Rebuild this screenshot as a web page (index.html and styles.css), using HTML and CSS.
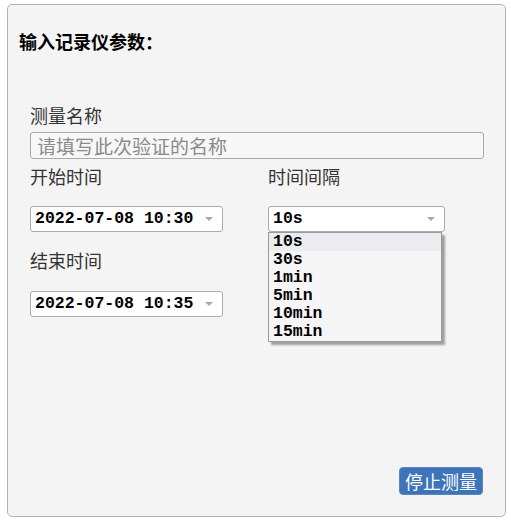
FILE: index.html
```html
<!DOCTYPE html>
<html lang="zh">
<head>
<meta charset="utf-8">
<title>输入记录仪参数</title>
<link rel="stylesheet" href="styles.css">
</head>
<body>
<div class="panel">
  <h2 class="title">输入记录仪参数：</h2>
  <div class="form">
    <div class="label label-first">测量名称</div>
    <div class="input"><span class="placeholder">请填写此次验证的名称</span></div>
    <div class="cols">
      <div class="col col-left">
        <div class="label">开始时间</div>
        <div class="select select-wide"><span class="val">2022-07-08 10:30</span><span class="caret"></span></div>
        <div class="label label-end">结束时间</div>
        <div class="select select-wide select-end"><span class="val">2022-07-08 10:35</span><span class="caret"></span></div>
      </div>
      <div class="col col-right">
        <div class="label">时间间隔</div>
        <div class="select-wrap">
          <div class="select select-narrow"><span class="val">10s</span><span class="caret"></span></div>
          <ul class="dropdown">
            <li class="opt active">10s</li>
            <li class="opt">30s</li>
            <li class="opt">1min</li>
            <li class="opt">5min</li>
            <li class="opt">10min</li>
            <li class="opt">15min</li>
          </ul>
        </div>
      </div>
    </div>
  </div>
  <button class="btn">停止测量</button>
</div>
</body>
</html>
```

FILE: styles.css
```css
html, body {
  margin: 0;
  padding: 0;
  background: #ffffff;
}
body {
  font-family: "Noto Sans CJK SC", "Noto Sans", sans-serif;
}
.panel {
  box-sizing: border-box;
  margin: 4px 0 0 7px;
  width: 499px;
  height: 513px;
  border: 1px solid #b3b3b3;
  border-radius: 5px;
  background: #f4f4f4;
  display: flex;
  flex-direction: column;
  padding: 24px 22px 21px 11px;
}
.title {
  margin: 0;
  font-size: 18px;
  line-height: 24px;
  font-weight: bold;
  color: #000;
}
.form {
  padding-left: 11px;
}
.label {
  font-size: 18px;
  line-height: 24px;
  color: #333;
  margin-bottom: 18px;
}
.label-first {
  margin-top: 50px;
  margin-bottom: 5px;
}
.input {
  box-sizing: border-box;
  width: 454px;
  height: 27px;
  border: 1px solid #aaa;
  border-radius: 3px;
  background: #f7f7f7;
  display: flex;
  align-items: center;
  padding-left: 6px;
  margin-bottom: 5px;
}
.placeholder {
  font-size: 19px;
  line-height: 25px;
  color: #8a8a8a;
}
.cols {
  display: flex;
}
.col-left {
  width: 238px;
}
.col-right {
  flex: 1;
}
.select {
  box-sizing: border-box;
  height: 26px;
  border: 1px solid #aaa;
  border-radius: 3px;
  background: #fff;
  display: flex;
  align-items: center;
  justify-content: space-between;
  padding: 0 9px 0 4px;
}
.select-wide {
  width: 193px;
}
.select-narrow {
  width: 177px;
}
.label-end {
  margin-top: 16px;
  margin-bottom: 19px;
}
.val {
  font-family: "Liberation Mono", monospace;
  font-weight: bold;
  font-size: 16.5px;
  line-height: 20px;
  color: #000;
}
.caret {
  width: 0;
  height: 0;
  border-left: 4px solid transparent;
  border-right: 4px solid transparent;
  border-top: 4px solid #aaa;
}
.select-wrap {
  position: relative;
}
.dropdown {
  position: absolute;
  left: 0;
  top: 26px;
  box-sizing: border-box;
  width: 174px;
  margin: 0;
  padding: 0;
  list-style: none;
  background: #f5f5f5;
  border: 1px solid #9a9a9a;
  box-shadow: 3px 3px 2px rgba(0, 0, 0, 0.35);
}
.opt {
  font-family: "Liberation Mono", monospace;
  font-weight: bold;
  font-size: 16.5px;
  line-height: 18px;
  height: 18px;
  padding-left: 4px;
  color: #000;
}
.opt.active {
  background: #eaecef;
}
.btn {
  margin-top: auto;
  align-self: flex-end;
  box-sizing: border-box;
  width: 84px;
  height: 28px;
  border: 1px solid #5d86bd;
  border-radius: 4px;
  background: #3d74b9;
  color: #fff;
  font-family: "Noto Sans CJK SC", sans-serif;
  font-size: 18px;
  line-height: 24px;
  padding: 0;
}
```
